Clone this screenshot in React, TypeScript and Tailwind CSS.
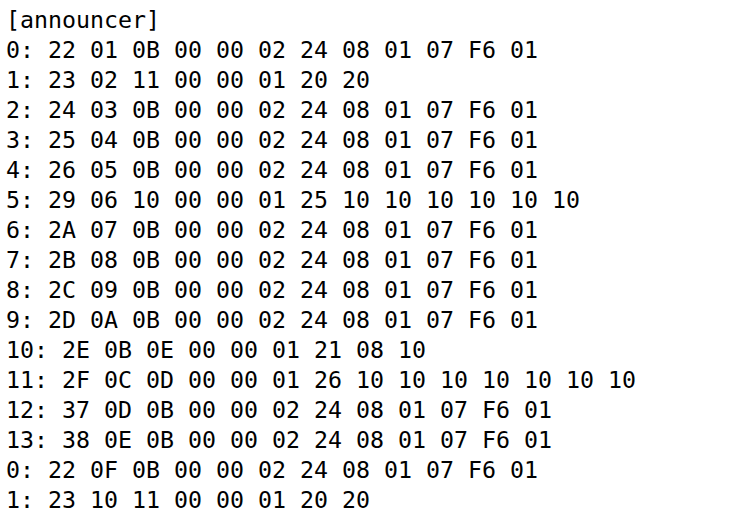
const lines = [
	"[announcer]",
	"0: 22 01 0B 00 00 02 24 08 01 07 F6 01",
	"1: 23 02 11 00 00 01 20 20",
	"2: 24 03 0B 00 00 02 24 08 01 07 F6 01",
	"3: 25 04 0B 00 00 02 24 08 01 07 F6 01",
	"4: 26 05 0B 00 00 02 24 08 01 07 F6 01",
	"5: 29 06 10 00 00 01 25 10 10 10 10 10 10",
	"6: 2A 07 0B 00 00 02 24 08 01 07 F6 01",
	"7: 2B 08 0B 00 00 02 24 08 01 07 F6 01",
	"8: 2C 09 0B 00 00 02 24 08 01 07 F6 01",
	"9: 2D 0A 0B 00 00 02 24 08 01 07 F6 01",
	"10: 2E 0B 0E 00 00 01 21 08 10",
	"11: 2F 0C 0D 00 00 01 26 10 10 10 10 10 10 10",
	"12: 37 0D 0B 00 00 02 24 08 01 07 F6 01",
	"13: 38 0E 0B 00 00 02 24 08 01 07 F6 01",
	"0: 22 0F 0B 00 00 02 24 08 01 07 F6 01",
	"1: 23 10 11 00 00 01 20 20",
];

export default function App() {
	return (
		<div className="w-[754px] h-[524px] overflow-hidden bg-white pl-[6px] pt-[5px] text-black">
			<pre className="font-['DejaVu_Sans_Mono',monospace] text-[23.25px] leading-[30px]">
				{lines.map((line, i) => (
					<div key={i}>{line}</div>
				))}
			</pre>
		</div>
	);
}
